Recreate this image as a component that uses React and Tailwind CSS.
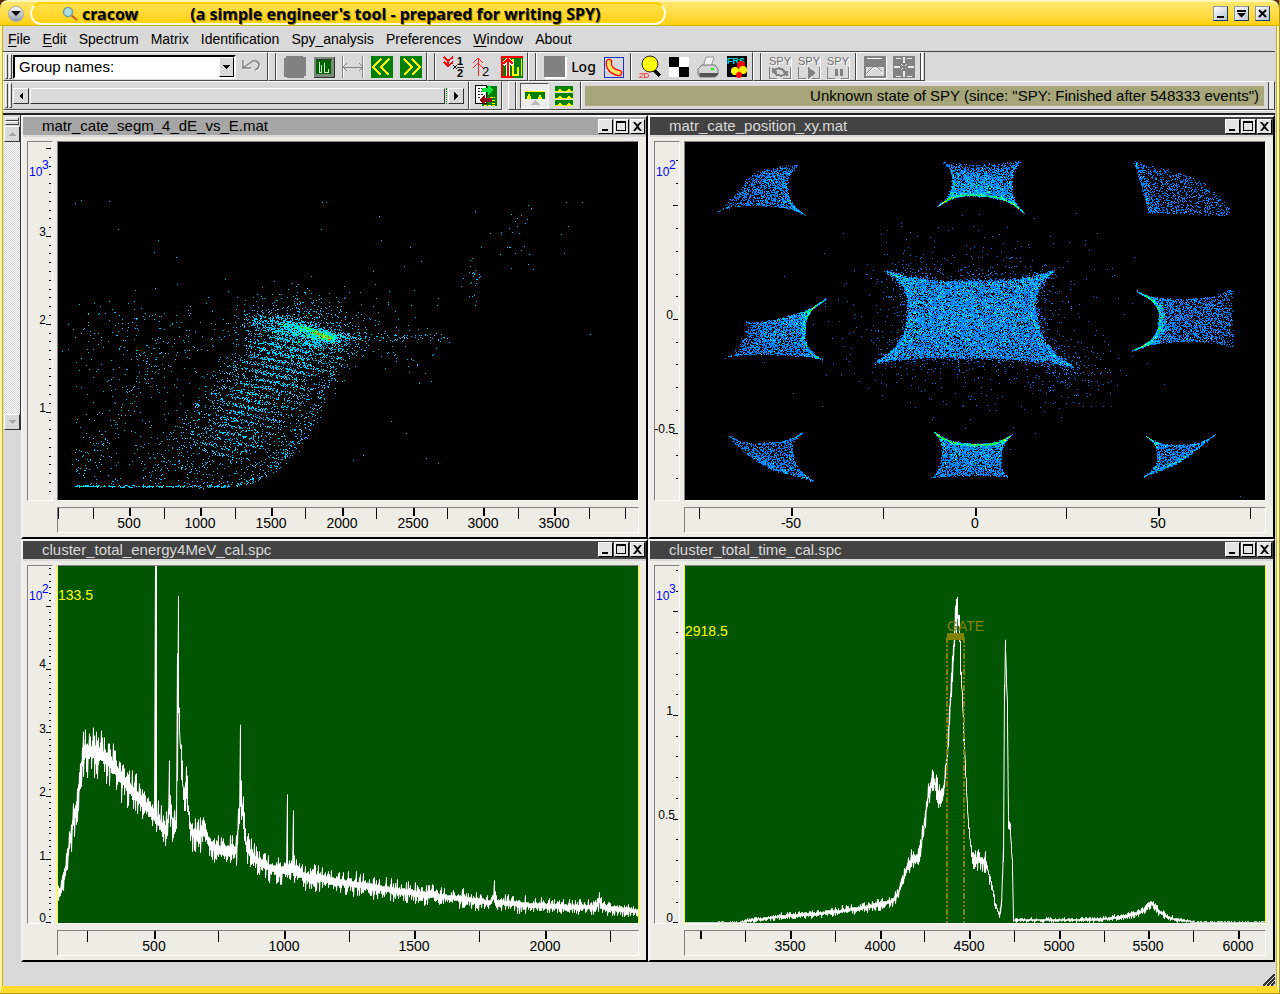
import { clsx } from "clsx";

const PLOT_W = 580;
const PLOT_H = 358;

/* ---------- data ---------- */

const makeRandom = (seed) => () => {
  seed = (seed + 0x6d2b79f5) | 0;
  let t = Math.imul(seed ^ (seed >>> 15), 1 | seed);
  t = (t + Math.imul(t ^ (t >>> 7), 61 | t)) ^ t;
  return ((t ^ (t >>> 14)) >>> 0) / 4294967296;
};

const gaussian = (rnd) => rnd() + rnd() + rnd() + rnd() - 2;

// counts hits per channel and groups the channels in one path per colour
const toLayers = (hits, colors, limits) => {
  const layers = colors.map((color) => ({ color, d: "" }));
  hits.forEach((n, key) => {
    let i = 0;
    while (i < limits.length && n > limits[i]) i++;
    layers[i].d += `M${key % PLOT_W} ${Math.floor(key / PLOT_W)}h1v1h-1z`;
  });
  return layers;
};

const makeHits = () => {
  const hits = new Map();
  const add = (x, y, n = 1) => {
    const px = Math.round(x);
    const py = Math.round(y);
    if (px < 0 || py < 0 || px >= PLOT_W || py >= PLOT_H) return;
    const key = py * PLOT_W + px;
    hits.set(key, (hits.get(key) || 0) + n);
  };
  return { hits, add };
};

const makeEnergyMatrix = () => {
  const rnd = makeRandom(7);
  const { hits, add } = makeHits();
  // x limit of the curved lower right edge
  const edge = (y) => {
    const t = Math.min(1, Math.max(0, (344 - y) / 150));
    return 135 + 155 * Math.pow(t, 0.3);
  };
  for (let i = 0; i < 520; i++) {
    const y = 175 + Math.sqrt(rnd()) * 168;
    const x = 17 + rnd() * 250;
    if (x < edge(y)) add(x, y);
  }
  for (let i = 0; i < 1000; i++) {
    const y = 200 + rnd() * 143;
    const x = 90 + rnd() * 200;
    if (x < edge(y) && x > 210 - (y - 180) * 0.9) add(x, y);
  }
  for (let i = 0; i < 260; i++) {
    const y = 344 - Math.pow(rnd(), 1.7) * 130;
    add(edge(y) - 4 + gaussian(rnd) * 8, y + rnd() * 2);
  }
  for (let i = 0; i < 150; i++) add(17 + Math.pow(rnd(), 1.1) * 150, 343 + rnd() * 2);
  for (let i = 0; i < 60; i++) add(17 + rnd() * 110, 344);
  for (let i = 0; i < 24; i++) add(17 + rnd() * 22, 344);
  // fine stripes going down to the left
  for (let k = 0; k < 20; k++) {
    const t = k / 19;
    const cx = 250 - 92 * t;
    const cy = 187 + 124 * t;
    const count = 205 * (1 - t * 0.75);
    for (let i = 0; i < count; i++) {
      const dx = gaussian(rnd) * (42 - 4 * t);
      add(cx + dx, cy + dx * 0.2 + gaussian(rnd) * 2.1);
    }
  }
  for (let i = 0; i < 800; i++) add(238 + gaussian(rnd) * 50, 186 + gaussian(rnd) * 30);
  for (let i = 0; i < 600; i++) {
    const dx = gaussian(rnd) * 42;
    add(242 + dx, 190 + dx * 0.22 + gaussian(rnd) * 10);
  }
  for (let i = 0; i < 700; i++) {
    const t = Math.sqrt(rnd());
    add(216 + 60 * t + gaussian(rnd) * 7, 176 + 21 * t + gaussian(rnd) * 4);
  }
  for (let i = 0; i < 190; i++) {
    const t = rnd();
    add(255 + t * 21, 190 + t * 8 + gaussian(rnd) * 2);
  }
  for (let i = 0; i < 110; i++) add(282 + Math.pow(rnd(), 1.8) * 110, 195 + gaussian(rnd) * 4);
  for (let i = 0; i < 120; i++) add(270 + Math.pow(rnd(), 1.5) * 110, 190 + gaussian(rnd) * 45);
  for (let i = 0; i < 170; i++) add(90 + gaussian(rnd) * 70, 188 + gaussian(rnd) * 32);
  for (let i = 0; i < 120; i++) {
    const t = rnd();
    add(20 + t * 90 + gaussian(rnd) * 12, 330 - t * 130 + gaussian(rnd) * 12);
  }
  for (let i = 0; i < 26; i++) add(415 + gaussian(rnd) * 9, 138 + gaussian(rnd) * 20);
  for (let i = 0; i < 26; i++) add(455 + gaussian(rnd) * 24, 90 + gaussian(rnd) * 28);
  [[17, 61], [23, 58], [51, 59], [60, 87], [96, 110], [100, 98], [118, 115], [264, 60], [268, 60],
    [263, 87], [321, 74], [323, 98], [352, 105], [508, 60], [524, 60], [506, 111], [510, 84],
    [503, 92], [167, 137], [380, 321], [368, 316], [348, 291], [333, 279], [295, 318], [305, 313],
    [532, 192], [470, 122], [475, 127]].forEach(([x, y]) => add(x, y));
  return toLayers(hits, ["#00c8ff", "#00ffc0", "#00ff40", "#b0ff00", "#ff3000"], [2, 3, 5, 7]);
};

/* Each hole of the mask: four tips (clockwise from the top left) and how far
   the top, right, bottom and left sides bend. */
const HOLES = [
  { tips: [[64, 34], [114, 23], [121, 73], [32, 70]], bow: [-3, -15, -8, 1], n: 1400, pu: 0.65, pv: 0.8, hot: [0, 100, 80, 0] },
  { tips: [[256, 19], [337, 18], [339, 71], [251, 65]], bow: [3, -11, -14, 13], n: 3000, pu: 1, pv: 0.7, hot: [0, 100, 620, 100] },
  { tips: [[449, 19], [504, 33], [546, 74], [464, 70]], bow: [0, 8, 0, 0], n: 1150, pu: 1.5, pv: 0.8, hot: [0, 0, 30, 60] },
  { tips: [[57, 178], [142, 156], [138, 218], [38, 216]], bow: [8, -20, -5, 8], n: 2500, pu: 0.65, pv: 1, hot: [80, 400, 120, 0] },
  { tips: [[200, 128], [370, 128], [391, 226], [188, 221]], bow: [11, -28, -8, 28], n: 12500, pu: 1, pv: 1, hot: [500, 500, 300, 500], blur: 2 },
  { tips: [[451, 149], [547, 146], [548, 206], [446, 209]], bow: [9, 0, -8, 25], n: 2500, pu: 1.5, pv: 1, hot: [100, 0, 120, 520] },
  { tips: [[42, 292], [119, 289], [130, 339], [84, 326]], bow: [10, -16, 0, -4], n: 1000, pu: 0.8, pv: 1, hot: [100, 90, 0, 0] },
  { tips: [[248, 289], [327, 292], [323, 335], [245, 336]], bow: [11, -9, -2, 10], n: 2700, pu: 1, pv: 1.3, hot: [600, 100, 60, 100] },
  { tips: [[459, 293], [530, 292], [494, 320], [457, 335]], bow: [10, 0, 0, 14], n: 950, pu: 1.2, pv: 1.1, hot: [130, 0, 0, 110] },
];

const bend = (a, b, t, dx, dy) => {
  const k = 1 - Math.pow(Math.abs(2 * t - 1), 2.8);
  return [a[0] + (b[0] - a[0]) * t + dx * k, a[1] + (b[1] - a[1]) * t + dy * k];
};

const holePoint = ({ tips: [tl, tr, br, bl], bow }, u, v) => {
  const top = bend(tl, tr, u, 0, bow[0]);
  const right = bend(tr, br, v, bow[1], 0);
  const bottom = bend(bl, br, u, 0, bow[2]);
  const left = bend(tl, bl, v, bow[3], 0);
  return [0, 1].map(
    (i) =>
      (1 - v) * top[i] + v * bottom[i] + (1 - u) * left[i] + u * right[i] -
      ((1 - u) * (1 - v) * tl[i] + u * (1 - v) * tr[i] + (1 - u) * v * bl[i] + u * v * br[i])
  );
};

const makePositionMatrix = () => {
  const rnd = makeRandom(21);
  const { hits, add } = makeHits();
  HOLES.forEach((hole) => {
    const blur = hole.blur ?? 0.9;
    for (let i = 0; i < hole.n; i++) {
      const [x, y] = holePoint(hole, Math.pow(rnd(), hole.pu), Math.pow(rnd(), hole.pv));
      add(x + gaussian(rnd) * blur, y + gaussian(rnd) * blur);
    }
    hole.hot.forEach((count, side) => {
      for (let i = 0; i < count; i++) {
        const t = rnd();
        const depth = Math.abs(gaussian(rnd)) * 0.07;
        const uv = [[t, depth], [1 - depth, t], [t, 1 - depth], [depth, t]][side];
        const [x, y] = holePoint(hole, uv[0], uv[1]);
        add(x, y);
      }
    });
  });
  for (let i = 0; i < 3200; i++) {
    const [x, y] = holePoint(HOLES[4], rnd(), rnd());
    add(x + gaussian(rnd) * 14, y + gaussian(rnd) * 12);
  }
  for (let i = 0; i < 1000; i++) add(285 + gaussian(rnd) * 100, 178 + gaussian(rnd) * 68);
  for (let i = 0; i < 160; i++) add(385 + gaussian(rnd) * 38, 232 + gaussian(rnd) * 24);
  for (let i = 0; i < 25; i++) add(60 + rnd() * 480, 90 + rnd() * 230);
  add(555, 354);
  return toLayers(hits, ["#0080ff", "#00c0ff", "#00ffd0", "#00ff00", "#e0ff00"], [2, 3, 5, 9]);
};

// [x, y] anchors of the curves, in plot pixels
const ENERGY = [
  [0, 327], [4, 321], [8, 301], [11, 279], [15, 254], [19, 237], [22, 211], [25, 187], [28, 185],
  [42, 188], [52, 197], [62, 211], [72, 223], [82, 235], [92, 245], [102, 259], [108, 265],
  [110, 251], [112, 239], [114, 257], [118, 259], [120, 135], [122, 175], [125, 230], [128, 224],
  [132, 265], [138, 271], [146, 265], [152, 280], [165, 286], [178, 284], [182, 235], [185, 251],
  [188, 281], [195, 293], [212, 303], [228, 305], [236, 303], [250, 313], [262, 313], [292, 318],
  [342, 326], [392, 332], [432, 337], [436, 330], [439, 337], [492, 341], [538, 342], [541, 334],
  [545, 342], [580, 346],
];

const TIME = [
  [0, 358], [54, 357], [64, 355], [95, 351], [135, 348], [175, 343], [195, 339], [208, 335],
  [212, 329], [218, 314], [223, 299], [227, 294], [232, 294], [236, 279], [240, 249], [243, 229],
  [246, 219], [248, 212], [251, 224], [255, 237], [259, 219], [262, 189], [264, 154], [266, 114],
  [268, 84], [270, 59], [272, 36], [273, 54], [275, 89], [277, 134], [279, 179], [281, 224],
  [283, 259], [285, 279], [288, 294], [300, 296], [305, 314], [310, 339], [314, 350], [316, 340],
  [318, 284], [319, 124], [320, 78], [322, 150], [323, 254], [325, 264], [327, 300], [328, 355],
  [415, 354], [440, 351], [457, 346], [466, 337], [473, 346], [485, 353], [510, 357], [580, 357],
];

const curveAt = (anchors, x) => {
  const i = anchors.findIndex(([ax]) => ax > x);
  if (i < 1) return anchors[anchors.length - 1][1];
  const [[x0, y0], [x1, y1]] = [anchors[i - 1], anchors[i]];
  return y0 + ((y1 - y0) * (x - x0)) / (x1 - x0);
};

const makeSpectrum = (anchors, noise, peaks, seed) => {
  const rnd = makeRandom(seed);
  let d = "";
  for (let x = 0; x < PLOT_W; x++) {
    const y = curveAt(anchors, x);
    const amp = Math.max(0.4, Math.sqrt(Math.max(0, PLOT_H - y)) * noise);
    const high = peaks[x] ?? y - amp * (0.3 + Math.pow(rnd(), 2) * 1.3);
    const low = y + amp * (0.3 + Math.pow(rnd(), 2) * 1.3);
    d += `${d ? "L" : "M"}${x + 0.5} ${Math.round(high)}V${Math.min(357, Math.round(low))}`;
  }
  return d;
};

const energyMatrix = makeEnergyMatrix();
const positionMatrix = makePositionMatrix();
const energyCurve = makeSpectrum(
  ENERGY,
  1.3,
  { 25: 166, 43: 165, 97: 0, 98: 0, 111: 195, 119: 88, 120: 30, 122: 182, 124: 195, 129: 210, 182: 159, 183: 215, 229: 229, 235: 245, 436: 315, 541: 327 },
  5
);
const timeCurve = makeSpectrum(TIME, 0.85, { 272: 31, 320: 74 }, 9);

/* ---------- small parts ---------- */

const RAISED = "border border-t-white border-l-white border-b-[#333] border-r-[#333] bg-[#d9d9d9]";

const WindowButtons = () => (
  <div className="flex gap-px pr-px">
    {[
      ["Minimize", "M3 9h6v2H3z"],
      ["Maximize", "M1 1h10v10H1zM2 3v7h8V3z"],
      ["Close", "M2 2h2l2.500 2.500L9 2h2L7.500 6.500 11 11H9L6.500 8.500 4 11H2l3.500-4.500z"],
    ].map(([label, d]) => (
      <button
        key={label}
        aria-label={label}
        className="w-[15px] h-[15px] bg-[#e4e4e4] border border-t-white border-l-white border-b-black border-r-black"
      >
        <svg viewBox="0 0 13 13" className="block w-[13px] h-[13px]">
          <path d={d} fillRule="evenodd" />
        </svg>
      </button>
    ))}
  </div>
);

const FrameButton = ({ label, children }) => (
  <button
    aria-label={label}
    className="w-[15px] h-[15px] bg-gradient-to-br from-white to-[#b8c4d4] border border-[#8a98a8] border-b-[#1d3a5c] border-r-[#1d3a5c]"
  >
    <svg viewBox="0 0 13 13" className="block w-[13px] h-[13px]">{children}</svg>
  </button>
);

const Icon = ({ label, children, pressed }) => (
  <button
    aria-label={label}
    className={clsx(
      "w-[29px] h-[26px] flex items-center justify-center shrink-0",
      pressed && "bg-[#ececec] border border-t-[#555] border-l-[#555] border-b-white border-r-white"
    )}
  >
    <svg viewBox="0 0 22 22" className="w-[22px] h-[22px] shrink-0 overflow-visible" shapeRendering="crispEdges">
      {children}
    </svg>
  </button>
);

const Handle = () => <div className="w-[7px] self-stretch border-r border-[#444] shadow-[1px_0_0_white] shrink-0 mr-1" />;

const Grip = () => (
  <div className="flex gap-px self-stretch pl-px pr-px py-px shrink-0">
    <div className="w-[3px] border border-t-white border-l-white border-b-[#444] border-r-[#444]" />
    <div className="w-[3px] border border-t-white border-l-white border-b-[#444] border-r-[#444]" />
  </div>
);

const Bar = ({ children, className }) => (
  <div
    className={clsx(
      "flex items-center border border-t-white border-l-white border-b-[#444] border-r-[#444]",
      className
    )}
  >
    {children}
  </div>
);

const Separator = () => <div className="w-[2px] self-stretch bg-white border-l border-[#444] mx-[3px] shrink-0" />;

const SpyLabel = () => (
  <>
    <path d="M1 23h21V2" fill="none" stroke="#fff" />
    <path d="M0 11v11h8M14 22h7V11" fill="none" stroke="#828282" />
    <text x="1" y="10" fontSize="11" fill="#fff">SPY</text>
    <text x="0" y="9" fontSize="11" fill="#707070">SPY</text>
  </>
);

/* ---------- plots ---------- */

const pct = (v, size) => `${(v / size) * 100}%`;

const YAxis = ({ ticks, labels, exponent, exponentY }) => (
  <div className="w-[26px] border border-t-[#828282] border-l-[#828282] border-b-white border-r-white">
    <svg className="block w-full h-full overflow-visible text-[12px]" shapeRendering="crispEdges">
      {ticks.map(([y, major]) => (
        <rect key={y} x={major ? 18 : 21} y={pct(y, PLOT_H)} width={major ? 5 : 2} height="1" />
      ))}
      {labels.map(([y, text]) => (
        <text key={text} x={text.length > 1 ? 20 : 18} y={pct(y, PLOT_H)} textAnchor="end">{text}</text>
      ))}
      <text x="1" y={pct(exponentY, PLOT_H)} fill="#0000f0">10</text>
      <text x="14" y={pct(exponentY - 7, PLOT_H)} fill="#0000f0">{exponent}</text>
    </svg>
  </div>
);

const XAxis = ({ majors, minors }) => (
  <div className="h-[26px] border border-t-[#828282] border-l-[#828282] border-b-white border-r-white">
    <svg className="block w-full h-full overflow-visible text-[14px]" shapeRendering="crispEdges">
      {minors.map((x) => (
        <rect key={x} x={pct(x, PLOT_W)} y="0" width="1" height="11" />
      ))}
      {majors.map(([x, text]) => (
        <g key={x}>
          <rect x={pct(x, PLOT_W)} y="0" width="2" height="8" />
          <text x={pct(x, PLOT_W)} y="20" textAnchor="middle">{text}</text>
        </g>
      ))}
    </svg>
  </div>
);

const range = (from, to, step) => {
  const out = [];
  for (let v = from; v <= to + 0.01; v += step) out.push(v);
  return out;
};

const PlotWindow = ({ title, active, y, x, spectrum, children }) => (
  <section className="flex flex-col min-h-0 min-w-0 border-2 border-t-[#f4f4f4] border-l-[#f4f4f4] border-b-black border-r-black bg-[#ededE5]">
    <header
      className={clsx(
        "h-[18px] flex items-center justify-between pl-[19px] text-[15px] leading-[18px]",
        active ? "bg-[#a6a6a6] text-black" : "bg-[#434343] text-[#d9d9d9]"
      )}
    >
      <h2>{title}</h2>
      <WindowButtons />
    </header>
    <div className="flex-1 min-h-0 flex gap-[4px] pl-[4px] pr-[7px] pt-[4px] pb-[4px] border-t-2 border-[#d9d9d9]">
      <div className="flex flex-col pb-8">
        <div className="flex-1 flex">
          <YAxis {...y} />
        </div>
      </div>
      <div className="flex-1 min-w-0 flex flex-col gap-[6px]">
        <div
          className={clsx(
            "flex-1 min-h-0 border border-t-[#828282] border-b-white",
            spectrum ? "bg-[#005500] border-l-[#ffff00] border-r-[#ffff00]" : "bg-black border-l-[#828282] border-r-white"
          )}
        >
          <svg className="block w-full h-full text-[14px]" shapeRendering="crispEdges">
            {children}
          </svg>
        </div>
        <XAxis {...x} />
      </div>
    </div>
  </section>
);

const Drawing = ({ children }) => (
  <svg width="100%" height="100%" viewBox={`0 0 ${PLOT_W} ${PLOT_H}`} preserveAspectRatio="none">
    {children}
  </svg>
);

const Layers = ({ layers }) => (
  <Drawing>
    {layers.map(({ color, d }) => (
      <path key={color} d={d} fill={color} />
    ))}
  </Drawing>
);

/* ---------- bars ---------- */

const TitleBar = () => (
  <div className="h-[26px] flex items-center gap-[6px] pl-2 pr-[9px] bg-gradient-to-b from-[#ffe86a] to-[#ffd000] border-t-2 border-t-[#fff6b8] border-b border-b-[#d0b000] rounded-t-lg">
    <button aria-label="Window menu" className="w-4 h-4 rounded-full bg-gradient-to-b from-white to-[#8d97a5] border border-[#9aa] flex items-center justify-center">
      <svg viewBox="0 0 10 6" className="w-[10px] h-[6px]"><path d="M0 0h10L5 5z" /></svg>
    </button>
    <div className="h-[23px] flex items-center w-[636px] pl-[30px] rounded-full border-2 border-t-[#ffd000] border-[#fffbe0] bg-gradient-to-b from-[#ffe04a] to-[#ffd200] font-['Noto_Sans',sans-serif] font-bold text-[16px] leading-5 whitespace-pre [text-shadow:1px_1px_0_#a88a00]">
      <svg viewBox="0 0 16 16" className="w-4 h-4 mr-1 shrink-0">
        <path d="M9 9l6 5" stroke="#c06030" strokeWidth="2" />
        <circle cx="6" cy="6" r="4.500" fill="#a8e0e0" stroke="#7c98a0" strokeWidth="1.500" />
      </svg>
      <h1 className="flex gap-[52px]">
        <span>cracow</span>
        <span>(a simple engineer's tool - prepared for writing SPY)</span>
      </h1>
    </div>
    <div className="ml-auto flex gap-[6px]">
      <FrameButton label="Minimize"><path d="M3 9h7v2H3z" /></FrameButton>
      <FrameButton label="Restore"><path d="M2 3h9v2H2zM2 6h9L6.500 10.500z" /></FrameButton>
      <FrameButton label="Close"><path d="M3 3l7 7M10 3l-7 7" stroke="#000" strokeWidth="2" /></FrameButton>
    </div>
  </div>
);

const MENUS = [
  ["F", "ile"], ["E", "dit"], ["", "Spectrum"], ["", "Matrix"], ["", "Identification"],
  ["", "Spy_analysis"], ["", "Preferences"], ["W", "indow"], ["", "About"],
];

const MenuBar = () => (
  <nav className="h-[26px] flex items-center gap-3 pl-[5px] pt-px text-[14px] border-b border-[#444]">
    {MENUS.map(([key, rest]) => (
      <button key={rest}>
        <span className="underline underline-offset-2">{key}</span>
        {rest}
      </button>
    ))}
  </nav>
);

const MainTools = () => (
  <div className="flex h-[29px]">
    <Bar className="w-[265px]">
      <Grip />
      <label className="relative w-[223px] h-6 border-2 border-t-black border-l-black border-b-white border-r-white bg-white flex">
        <select aria-label="Group names" className="appearance-none flex-1 pl-1 text-[15px] leading-5 bg-white">
          <option>Group names:</option>
        </select>
        <span className="absolute right-0 top-0 w-[15px] h-5 pointer-events-none flex items-center justify-center bg-[#d9d9d9] border border-t-white border-l-white border-b-black border-r-black">
          <svg viewBox="0 0 8 4" className="w-2 h-1" shapeRendering="crispEdges"><path d="M0 0h7L3.500 4z" /></svg>
        </span>
      </label>
      <Icon label="Undo">
        <g transform="translate(0 -1)" fill="none" shapeRendering="auto">
          <path d="M4 6v8h8M4 14l7-6c4-3 9-1 9 3 0 3-2 4-4 5" stroke="#fff" />
          <path d="M3 5v8h8M3 13l7-5c4-4 9-2 9 2 0 3-2 4-4 5" stroke="#828282" strokeWidth="1.500" />
        </g>
      </Icon>
    </Bar>
    <Bar className="pr-px">
      <Handle />
      <Icon label="Stop"><path d="M2 0h17v1h3v19h-2v2H3v-1H0V2h2z" fill="#828282" /></Icon>
      <Icon label="Spectrum window">
        <path d="M1 1h20v20H1z" fill="#7a8a7a" />
        <path d="M3 4h15v14H3z" fill="#006400" />
        <path d="M1 21h20V1M3 3h16" fill="none" stroke="#333" />
        <path d="M6 6v10h2V9M11 16V7M11 16h4v-3" fill="none" stroke="#d0f0d0" />
      </Icon>
      <Icon label="Expand">
        <path d="M1 0v22M21 0v22" stroke="#fff" strokeWidth="2" />
        <path d="M.5 0v22M20.500 0v22M1 11h20M5 7l-4 4 4 4M17 7l4 4-4 4" fill="none" stroke="#828282" />
      </Icon>
      <Icon label="Move left">
        <path d="M0 0h22v22H0z" fill="#008000" />
        <path d="M10 3l-8 8 8 8M18 3l-8 8 8 8" fill="none" stroke="#ff0" strokeWidth="2" />
      </Icon>
      <Icon label="Move right">
        <path d="M0 0h22v22H0z" fill="#008000" />
        <path d="M4 3l8 8-8 8M12 3l8 8-8 8" fill="none" stroke="#ff0" strokeWidth="2" />
      </Icon>
    </Bar>
    <Bar className="pr-px">
      <Handle />
      <Icon label="Halve the scale">
        <path d="M1 1l4 4 5-4M1 6l4 4 5-4M5 3v7" fill="none" stroke="#f01010" strokeWidth="2" />
        <path d="M10 9l4 4M14 9l-4 4M14 11h7" stroke="#222" />
        <text x="14" y="9" fontSize="11" fontWeight="bold">1</text>
        <text x="14" y="21" fontSize="11" fontWeight="bold">2</text>
      </Icon>
      <Icon label="Double the scale">
        <path d="M6 20V2M1 7l5-5 5 5M1 12l5-5 5 5" fill="none" stroke="#ff2020" />
        <text x="10" y="20" fontSize="13">2</text>
      </Icon>
      <Icon label="Fit the scale">
        <path d="M0 0h22v22H0z" fill="#008000" />
        <path d="M11 3h2v15h3v-7h2v9h-7zM20 3h1v17h-1z" fill="#ff0" />
        <path d="M7 21V4M2 9l5-6 5 6" fill="none" stroke="#fff" strokeWidth="4" />
        <path d="M0 1h22M0 21h12M7 21V3M2 8l5-5 5 5M1 1v20" fill="none" stroke="#f00" strokeWidth="2" />
      </Icon>
    </Bar>
    <Bar className="pr-px">
      <Handle />
      <Icon label="Linear">
        <path d="M1 1h22v22H1z" fill="#fff" />
        <path d="M0 0h21v21H0z" fill="#828282" />
      </Icon>
      <button className="w-[29px] font-['Noto_Sans',sans-serif] text-[14px] font-medium">Log</button>
      <Icon label="Polygon gate">
        <path d="M2 1h19v20H2z" fill="none" stroke="#2030c0" />
        <g fill="none" strokeLinecap="round" shapeRendering="auto">
          <path d="M7 6c-1 5 3 10 10 11" stroke="#f00" strokeWidth="6.500" />
          <path d="M7 6c-1 5 3 10 10 11" stroke="#ffe060" strokeWidth="4" />
        </g>
      </Icon>
      <Separator />
      <Icon label="Zoom 2D">
        <path d="M14 13l7 7" stroke="#000" strokeWidth="3" />
        <circle cx="11" cy="8" r="8" fill="#ff0" stroke="#222" shapeRendering="auto" />
        <text x="0" y="22" fontSize="8" fill="#f00">2D</text>
      </Icon>
      <Icon label="Palette">
        <path d="M1 1h20v20H1z" fill="#fff" />
        <path d="M1 1h10v20h10V11H1z" fill="#000" />
      </Icon>
      <Icon label="Print">
        <g shapeRendering="auto">
          <path d="M6 11L9 1h8l-3 10z" fill="#f4f4f4" stroke="#999" />
          <path d="M1 13l4-4h13l3 4v5l-3 3H3l-2-3z" fill="#d4d4d4" stroke="#777" />
          <path d="M2 17h19v2l-3 2H3z" fill="#555" />
          <path d="M14 12h3v2h-3z" fill="#0f0" />
        </g>
      </Icon>
      <Icon label="FRS colours">
        <path d="M1 0h20v21H1z" fill="#000" />
        <text x="1" y="8" fontSize="9" fontWeight="bold" fill="#00e0e0">FRS</text>
        <g shapeRendering="auto">
          <circle cx="15" cy="9" r="4" fill="#f00" />
          <circle cx="9" cy="15" r="4" fill="#ff0" />
          <circle cx="17" cy="14" r="4" fill="#fe0" />
          <circle cx="13" cy="19" r="3" fill="#f00" />
        </g>
      </Icon>
    </Bar>
    <Bar className="pr-px">
      <Handle />
      <Icon label="SPY restart">
        <SpyLabel />
        <path d="M5 15c2-4 9-3 11 1M17 17c-2 4-9 3-11 0M4 12v4h4M18 20v-4h-4" fill="none" stroke="#828282" strokeWidth="2" />
      </Icon>
      <Icon label="SPY run">
        <SpyLabel />
        <path d="M10 11l8 6-8 6z" fill="#828282" />
      </Icon>
      <Icon label="SPY pause">
        <SpyLabel />
        <path d="M8 13h3v7H8zM13 13h3v7h-3z" fill="#828282" />
      </Icon>
      <Separator />
      <Icon label="Minimize windows">
        <path d="M1 1h21v21H1z" fill="none" stroke="#fff" />
        <path d="M0 0h22v22H0zM2 11v9h18v-9z" fill="#828282" fillRule="evenodd" />
        <path d="M2 19l7-7h4l6 6M3 2h15" fill="none" stroke="#fff" />
        <path d="M2 18l7-7M13 11l5 5" stroke="#828282" />
      </Icon>
      <Icon label="Tile windows">
        <path d="M0 0h22v22H0z" fill="#828282" />
        <path d="M11 1v6M11 15v6M1 11h6M15 11h6" stroke="#e8e8e8" strokeWidth="2" />
        <path d="M3 2h5M14 2h5M3 20h5M14 20h5M8 8l2 2M14 8l-2 2M8 14l2-2" stroke="#e8e8e8" />
      </Icon>
      <div className="w-[3px] self-stretch bg-white border-l border-[#444] ml-[2px]" />
    </Bar>
  </div>
);

const Arrow = ({ label, d, dim }) => (
  <button aria-label={label} className={clsx("w-4 h-4 shrink-0 flex items-center justify-center", RAISED)}>
    <svg viewBox="0 0 8 8" className={clsx("w-2 h-2", dim && "text-[#a8a8a8]")} fill="currentColor" shapeRendering="crispEdges">
      <path d={d} />
    </svg>
  </button>
);

const MoveTools = () => (
  <div className="flex h-[29px]">
    <Bar className="w-[466px]">
      <Grip />
      <Arrow label="Scroll left" d="M6 0v8L2 4z" />
      <div role="scrollbar" aria-orientation="horizontal" aria-controls="windows" aria-valuenow={0} className="flex-1 flex h-4 mx-px">
        <div className={clsx("flex-1", RAISED)} />
        <div className="w-[2px] border-r border-dotted border-[#080]" />
      </div>
      <Arrow label="Scroll right" d="M2 0v8l4-4z" />
      <div className="w-1" />
    </Bar>
    <Bar className="px-px">
      <Icon label="Swap">
        <path d="M12 1h10v20H7v-3h5z" fill="#008000" />
        <path d="M0 0h12v19H0z" fill="#000" />
        <path d="M1 1h10v17H1z" fill="#fff" />
        <path d="M3 3h6M3 6h4M3 9h5M3 12h2" stroke="#222" strokeDasharray="2 1" />
        <path d="M15 12h5M17 15h4M17 18h4M9 20h11" stroke="#ff0" strokeDasharray="3 1" />
        <path d="M7 3h6V0l6 5-6 5V7H7z" fill="#10e040" />
        <path d="M17 13h-7v-3l-6 5 6 5v-3h7z" fill="#900010" />
      </Icon>
    </Bar>
    <div className="w-[6px] border-l border-[#f4f4f4]" />
    <Bar className="pr-[2px]">
      <Handle />
      <Icon label="Single view" pressed>
        <path d="M1 6h20v8H1z" fill="#008000" />
        <path d="M1 6h20v1H1zM3 14v-3h1V9h2v2h1v3zM14 14v-2h1v-2h2v2h1v2z" fill="#ff0" />
        <path d="M11 15l5 5H6z" fill="#bbb" />
      </Icon>
      <Icon label="Tiled view">
        {[1, 8, 15].map((top) => (
          <g key={top}>
            <path d={`M2 ${top}h18v6H2z`} fill="#008000" />
            <path d={`M5 ${top + 5}l2-3 2 3zM14 ${top + 5}l2-3 2 3zM2 ${top + 5}h18v1H2z`} fill="#ff0" />
          </g>
        ))}
      </Icon>
    </Bar>
    <Bar className="flex-1 pl-[3px]">
      <output className="flex-1 h-5 pr-[5px] bg-[#a6a67a] text-right text-[15px] leading-5 truncate">
        Unknown state of SPY (since: "SPY: Finished after 548333 events")
      </output>
      <div className="w-[6px] self-stretch ml-1 bg-[#e8e8e8] border-l border-[#444]" />
    </Bar>
  </div>
);

const SideScroll = () => (
  <div className="w-[18px] shrink-0">
    <div className="h-[315px] flex flex-col items-stretch border-r border-[#333] pl-px pt-[2px]">
      <div className="h-1 mx-px border border-t-white border-l-white border-b-[#444] border-r-[#444]" />
      <div className="h-1 mx-px mb-px border border-t-white border-l-white border-b-[#444] border-r-[#444]" />
      <Arrow label="Scroll up" d="M4 2l4 4H0z" dim />
      <div
        role="scrollbar"
        aria-orientation="vertical"
        aria-controls="windows"
        aria-valuenow={0}
        className="flex-1 bg-[conic-gradient(#fff_25%,#d4d4d4_0_50%,#fff_0_75%,#d4d4d4_0)] bg-[length:2px_2px]"
      />
      <Arrow label="Scroll down" d="M0 2h8L4 6z" dim />
    </div>
  </div>
);

/* ---------- page ---------- */

const App = () => (
  <div className="min-h-screen flex flex-col bg-[#5a2d00] border-r border-b border-[#b89800] text-black font-['Liberation_Sans',Arial,sans-serif] cursor-default">
    <TitleBar />
    <div className="flex-1 flex flex-col bg-[#d9d9d9] border-l-2 border-l-[#fff3a0] border-r-2 border-r-[#fffbe0] border-b-[7px] border-b-[#ffd92e]">
      <div className="flex-1 flex flex-col border-x border-x-[#d0b000] pr-px">
        <MenuBar />
        <MainTools />
        <MoveTools />
        <div className="h-[5px] border-t border-white border-b-2 border-b-[#222]" />
        <main className="flex-1 flex">
          <SideScroll />
          <div id="windows" className="flex-1 min-w-0 grid grid-cols-2 grid-rows-2">
            <PlotWindow
              title="matr_cate_segm_4_dE_vs_E.mat"
              active
              y={{
                ticks: range(6, 357, 8.8).map((v, i) => [v, i % 10 === 0]),
                labels: [[94, "3"], [182, "2"], [270, "1"]],
                exponent: "3",
                exponentY: 34,
              }}
              x={{
                majors: [[71, "500"], [142, "1000"], [213, "1500"], [284, "2000"], [355, "2500"], [425, "3000"], [496, "3500"]],
                minors: [0, 35, 106, 177, 247, 318, 389, 460, 531, 567],
              }}
            >
              <Layers layers={energyMatrix} />
            </PlotWindow>
            <PlotWindow
              title="matr_cate_position_xy.mat"
              y={{
                ticks: range(18, 340, 22.75).map((v, i) => [v, i === 2 || i === 7 || i === 12]),
                labels: [[177, "0"], [291, "-0.5"]],
                exponent: "2",
                exponentY: 34,
              }}
              x={{
                majors: [[106, "-50"], [290, "0"], [473, "50"]],
                minors: [14, 198, 381, 565],
              }}
            >
              <Layers layers={positionMatrix} />
            </PlotWindow>
            <PlotWindow
              title="cluster_total_energy4MeV_cal.spc"
              spectrum
              y={{
                ticks: range(2, 357, 6.33).map((v, i) => [v, i % 10 === 6]),
                labels: [[102, "4"], [167, "3"], [230, "2"], [294, "1"], [356, "0"]],
                exponent: "2",
                exponentY: 34,
              }}
              x={{
                majors: [[96, "500"], [226, "1000"], [356, "1500"], [487, "2000"]],
                minors: [29, 160, 291, 421, 552],
              }}
            >
              <Drawing>
                <path d={energyCurve} fill="none" stroke="#fff" strokeWidth="1" />
              </Drawing>
              <text x="0" y="34" fill="#ff0">133.5</text>
            </PlotWindow>
            <PlotWindow
              title="cluster_total_time_cal.spc"
              spectrum
              y={{
                ticks: range(4, 357, 20.75).map((v, i) => [v, i % 5 === 2]),
                labels: [[149, "1"], [253, "0.5"], [356, "0"]],
                exponent: "3",
                exponentY: 34,
              }}
              x={{
                majors: [[15, ""], [105, "3500"], [195, "4000"], [284, "4500"], [374, "5000"], [463, "5500"], [553, "6000"]],
                minors: [60, 150, 239, 329, 419, 508],
              }}
            >
              <Drawing>
                <path d={timeCurve} fill="none" stroke="#fff" strokeWidth="1" />
                <path d="M262 71V358M279 71V358" stroke="#828200" strokeWidth="2" strokeDasharray="6 2 2 2 2 2" />
                <path d="M262 67h17v7h-17z" fill="#828200" />
              </Drawing>
              <text x={pct(262, PLOT_W)} y={pct(65, PLOT_H)} fill="#828200">GATE</text>
              <text x="0" y="70" fill="#ff0">2918.5</text>
            </PlotWindow>
          </div>
        </main>
        <footer className="h-6 flex justify-end items-end">
          <svg viewBox="0 0 12 12" className="w-3 h-3" shapeRendering="crispEdges">
            <path d="M0 12L12 0M4 12l8-8M8 12l4-4" stroke="#333" strokeWidth="1.500" />
          </svg>
        </footer>
      </div>
    </div>
  </div>
);

export default App;
